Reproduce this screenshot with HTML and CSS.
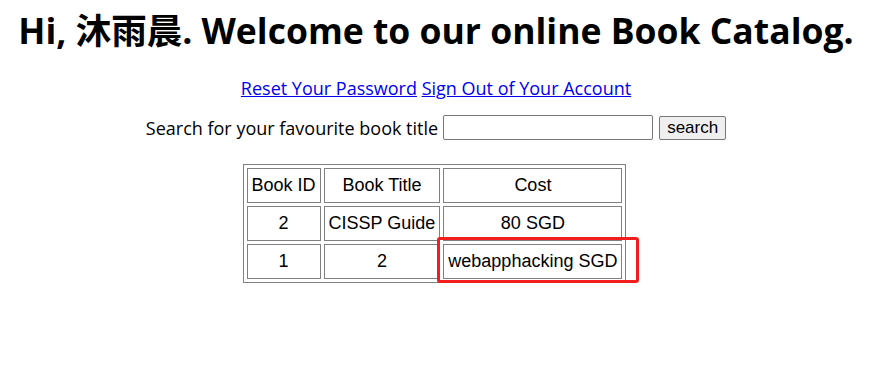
FILE: index.html
```html
<!DOCTYPE html>
<html>
<head>
<meta charset="utf-8">
<link rel="stylesheet" href="styles.css">
</head>
<body>
<div class="page">
  <h1 class="title">Hi, 沐雨晨. Welcome to our online Book Catalog.</h1>
  <p class="links"><a href="#">Reset Your Password</a> <a href="#">Sign Out of Your Account</a></p>
  <form class="search">
    <label>Search for your favourite book title</label>
    <input type="text" class="search-input">
    <button type="button" class="search-btn">search</button>
  </form>
  <div class="table-wrap">
    <table class="books">
      <tr><td>Book ID</td><td>Book Title</td><td>Cost</td></tr>
      <tr><td>2</td><td>CISSP Guide</td><td>80 SGD</td></tr>
      <tr><td>1</td><td>2</td><td class="hl">webapphacking SGD<span class="mark"></span></td></tr>
    </table>
  </div>
</div>
</body>
</html>
```
FILE: styles.css
```css
html, body {
  margin: 0;
  padding: 0;
  background: #fff;
}
.page {
  font-family: "Open Sans", "Noto Sans CJK SC", sans-serif;
  color: #000;
  text-align: center;
  padding-top: 6px;
}
.title {
  font-size: 35.5px;
  font-weight: 700;
  margin: 0;
  line-height: 48px;
}
.links {
  margin: 22px 0 0;
  font-size: 18px;
  line-height: 24px;
}
.links a {
  color: #0000ee;
}
.search {
  margin: 15px 0 0;
  font-size: 18px;
  display: flex;
  justify-content: center;
  align-items: center;
  gap: 5px;
}
.search-input {
  width: 204px;
  height: 19px;
  border: 1px solid #767676;
  border-radius: 2px;
  padding: 2px;
  margin: 0;
}
.search-btn {
  font-family: "Liberation Sans", Arial, sans-serif;
  font-size: 17px;
  height: 24px;
  padding: 0 7px;
  margin-left: 1px;
  border: 1px solid #767676;
  border-radius: 2px;
  background: #efefef;
  color: #000;
}
.table-wrap {
  display: flex;
  justify-content: center;
  margin-top: 24px;
}
.books {
  font-family: "Liberation Sans", Arial, sans-serif;
  font-size: 18px;
  border: 1px solid #808080;
  border-collapse: separate;
  border-spacing: 3px;
  margin-left: -3px;
}
.books td {
  border: 1px solid #808080;
  height: 33px;
  padding: 0 4px;
  text-align: center;
}
.hl {
  position: relative;
}
.mark {
  position: absolute;
  left: -7px;
  top: -8px;
  right: -18px;
  bottom: -5px;
  border: 3px solid #f21d1d;
  border-radius: 3px;
}
```
